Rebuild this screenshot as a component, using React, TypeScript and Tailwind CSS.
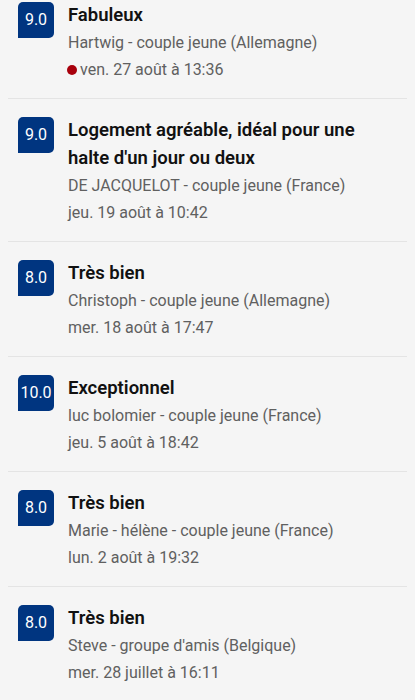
import React from "react";

type Review = {
  score: string;
  title: string;
  author: string;
  date: string;
  dot?: boolean;
};

const reviews: Review[] = [
  { score: "9.0", title: "Fabuleux", author: "Hartwig - couple jeune (Allemagne)", date: "ven. 27 août à 13:36", dot: true },
  { score: "9.0", title: "Logement agréable, idéal pour une halte d'un jour ou deux", author: "DE JACQUELOT - couple jeune (France)", date: "jeu. 19 août à 10:42" },
  { score: "8.0", title: "Très bien", author: "Christoph - couple jeune (Allemagne)", date: "mer. 18 août à 17:47" },
  { score: "10.0", title: "Exceptionnel", author: "luc bolomier - couple jeune (France)", date: "jeu. 5 août à 18:42" },
  { score: "8.0", title: "Très bien", author: "Marie - hélène - couple jeune (France)", date: "lun. 2 août à 19:32" },
  { score: "8.0", title: "Très bien", author: "Steve - groupe d'amis (Belgique)", date: "mer. 28 juillet à 16:11" },
];

export default function App() {
  return (
    <div className="w-[415px] h-[700px] overflow-hidden bg-[#f5f5f5] font-['Roboto',sans-serif]">
      <div className="-mt-4">
        {reviews.map((r, i) => (
          <div key={i} className="px-2">
            {i > 0 && <div className="h-px bg-[#e4e4e4]" />}
            <div className="flex gap-[14px] pl-[10px] pr-3 pt-[17px] pb-[15px]">
              <div className="w-9 h-9 mt-px shrink-0 bg-[#003580] rounded-[5px] rounded-bl-none flex items-center justify-center text-white text-[16px] leading-none">
                {r.score}
              </div>
              <div className="flex flex-col min-w-0">
                <div className="text-[18.5px] leading-[28px] font-semibold text-[#111111] pr-6">{r.title}</div>
                <div className="mt-px text-[16px] leading-[26px] text-[#606060]">{r.author}</div>
                <div className="text-[16px] leading-[27px] text-[#606060] flex items-center">
                  {r.dot && <span className="inline-block w-[10px] h-[10px] rounded-full bg-[#a8000c] -ml-px mr-[3px]" />}
                  {r.date}
                </div>
              </div>
            </div>
          </div>
        ))}
      </div>
    </div>
  );
}
